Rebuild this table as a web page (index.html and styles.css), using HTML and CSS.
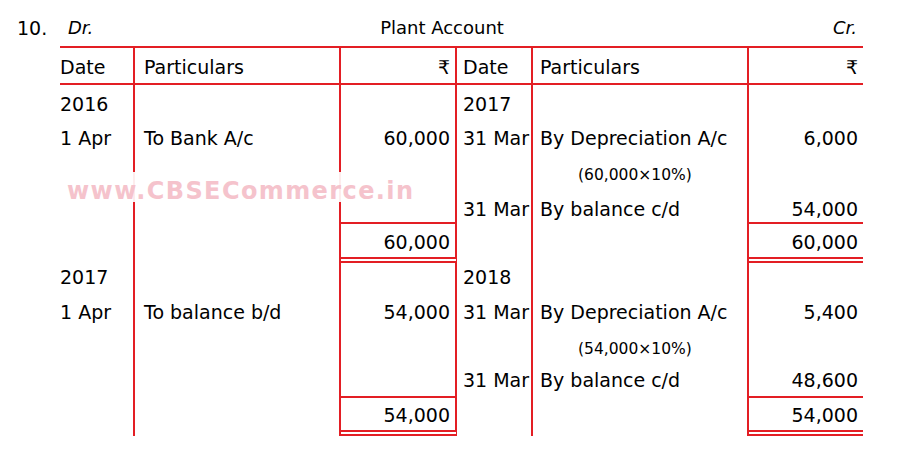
FILE: index.html
```html
<!DOCTYPE html>
<html lang="en">
<head>
<meta charset="utf-8">
<title>Plant Account</title>
<link rel="stylesheet" href="styles.css">
</head>
<body>
<div class="page">
  <div class="title-row">
    <span class="qno">10.</span>
    <div class="heading">
      <span class="side dr">Dr.</span>
      <span class="acct-name">Plant Account</span>
      <span class="side cr">Cr.</span>
    </div>
  </div>

  <div class="ledger">
    <div class="row head">
      <div class="c date">Date</div>
      <div class="c part">Particulars</div>
      <div class="c amt">₹</div>
      <div class="c date2">Date</div>
      <div class="c part2">Particulars</div>
      <div class="c amt2">₹</div>
    </div>

    <div class="row r-year1">
      <div class="c date">2016</div>
      <div class="c part"></div>
      <div class="c amt"></div>
      <div class="c date2">2017</div>
      <div class="c part2"></div>
      <div class="c amt2"></div>
    </div>
    <div class="row r-entry1">
      <div class="c date">1 Apr</div>
      <div class="c part">To Bank A/c</div>
      <div class="c amt">60,000</div>
      <div class="c date2">31 Mar</div>
      <div class="c part2">By Depreciation A/c</div>
      <div class="c amt2">6,000</div>
    </div>
    <div class="row r-note1">
      <div class="c date"></div>
      <div class="c part"></div>
      <div class="c amt"></div>
      <div class="c date2"></div>
      <div class="c part2 note">(60,000×10%)</div>
      <div class="c amt2"></div>
    </div>
    <div class="row r-bal1">
      <div class="c date"></div>
      <div class="c part"></div>
      <div class="c amt"></div>
      <div class="c date2">31 Mar</div>
      <div class="c part2">By balance c/d</div>
      <div class="c amt2">54,000</div>
    </div>
    <div class="row r-total1">
      <div class="c date"></div>
      <div class="c part"></div>
      <div class="c amt total">60,000</div>
      <div class="c date2"></div>
      <div class="c part2"></div>
      <div class="c amt2 total">60,000</div>
    </div>

    <div class="row r-year2">
      <div class="c date">2017</div>
      <div class="c part"></div>
      <div class="c amt"></div>
      <div class="c date2">2018</div>
      <div class="c part2"></div>
      <div class="c amt2"></div>
    </div>
    <div class="row r-entry2">
      <div class="c date">1 Apr</div>
      <div class="c part">To balance b/d</div>
      <div class="c amt">54,000</div>
      <div class="c date2">31 Mar</div>
      <div class="c part2">By Depreciation A/c</div>
      <div class="c amt2">5,400</div>
    </div>
    <div class="row r-note2">
      <div class="c date"></div>
      <div class="c part"></div>
      <div class="c amt"></div>
      <div class="c date2"></div>
      <div class="c part2 note">(54,000×10%)</div>
      <div class="c amt2"></div>
    </div>
    <div class="row r-bal2">
      <div class="c date"></div>
      <div class="c part"></div>
      <div class="c amt"></div>
      <div class="c date2">31 Mar</div>
      <div class="c part2">By balance c/d</div>
      <div class="c amt2">48,600</div>
    </div>
    <div class="row r-total2">
      <div class="c date"></div>
      <div class="c part"></div>
      <div class="c amt total">54,000</div>
      <div class="c date2"></div>
      <div class="c part2"></div>
      <div class="c amt2 total">54,000</div>
    </div>
  </div>

  <div class="watermark">www.CBSECommerce.in</div>
</div>
</body>
</html>
```

FILE: styles.css
```css
html, body {
  margin: 0;
  padding: 0;
  background: #ffffff;
}

body {
  font-family: "DejaVu Sans", "Noto Sans", sans-serif;
  color: #000000;
  width: 899px;
  height: 452px;
  overflow: hidden;
}

.page {
  position: relative;
  padding-left: 17px;
}

/* ---------- title ---------- */
.title-row {
  display: flex;
  padding-top: 16px;
  margin-bottom: 6px;
  height: 24px;
  line-height: 24px;
  font-size: 18px;
}

.qno {
  width: 43px;
  font-size: 19px;
}

.heading {
  width: 803px;
  display: grid;
  grid-template-columns: 1fr auto 1fr;
}

.side {
  font-style: italic;
}

.dr {
  padding-left: 8px;
}

.cr {
  text-align: right;
  padding-right: 6px;
}

.acct-name {
  padding-right: 39px;
}

/* ---------- ledger ---------- */
.ledger {
  margin-left: 43px;
  width: 803px;
  font-size: 19px;
}

.row {
  display: grid;
  grid-template-columns: 75px 206px 116px 76px 216px 114px;
  box-sizing: border-box;
}

.c {
  box-sizing: border-box;
  border-right: 2px solid #e31e24;
  white-space: nowrap;
}

.amt2 {
  border-right: none;
}

.date  { padding-left: 0; }
.part  { padding-left: 9px; }
.amt   { padding-right: 5px; text-align: right; }
.date2 { padding-left: 6px; }
.part2 { padding-left: 7px; }
.amt2  { padding-right: 5px; text-align: right; }

.note {
  font-size: 15.5px;
  padding-left: 45px;
}

.head {
  height: 39px;
  border-top: 2px solid #e31e24;
  border-bottom: 2px solid #e31e24;
}

.head .c {
  padding-top: 4px;
  line-height: 31px;
}

.r-year1  { height: 38px; line-height: 38px; }
.r-entry1 { height: 31px; line-height: 31px; }
.r-note1  { height: 42px; line-height: 42px; }
.r-bal1   { height: 26px; line-height: 26px; }
.r-total1 { height: 41px; }

.r-year2  { height: 28px; line-height: 28px; }
.r-entry2 { height: 42px; line-height: 42px; }
.r-note2  { height: 32px; line-height: 32px; }
.r-bal2   { height: 31px; line-height: 31px; }
.r-total2 { height: 40px; }

.total {
  border-top: 2px solid #e31e24;
  border-bottom: 6px double #e31e24;
  padding-top: 3px;
}

.r-total1 .total { line-height: 30px; }
.r-total2 .total { line-height: 29px; }

/* ---------- watermark ---------- */
.watermark {
  position: absolute;
  left: 65px;
  top: 172px;
  padding: 8px 3px 0 2px;
  height: 22px;
  line-height: 22px;
  font-family: "DejaVu Sans", sans-serif;
  font-weight: bold;
  font-size: 24px;
  letter-spacing: 1.4px;
  color: #f5c3cc;
  background: rgba(255, 255, 255, 0.92);
}
```
